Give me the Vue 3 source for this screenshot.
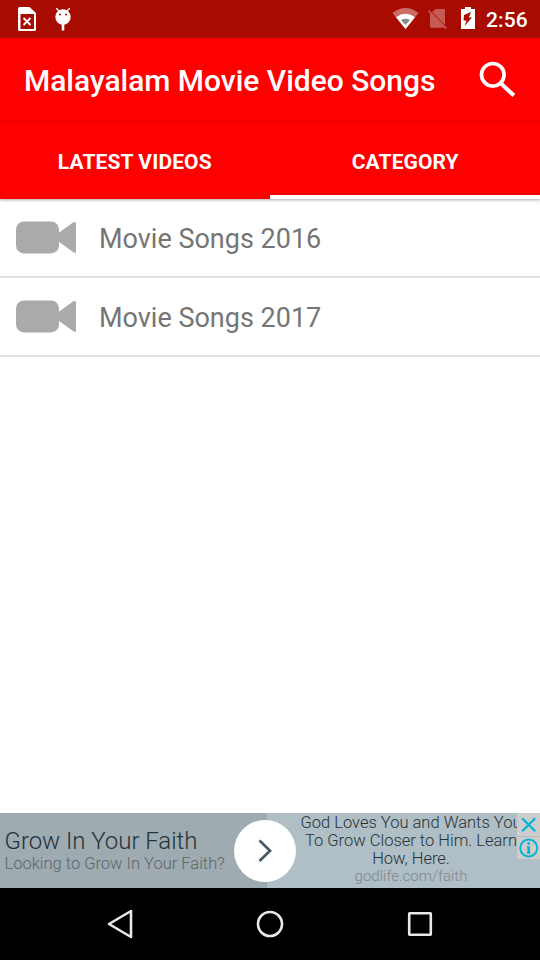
<template>
  <main class="screen">
    <header class="status-bar">
      <svg class="status-left" width="90" height="38" viewBox="0 0 90 38">
        <path d="M19.500 7H29.500L36 13v16.500q0 1.500-1.500 1.500h-15Q18 31 18 29.500V8.500Q18 7 19.500 7z" fill="#fff" />
        <path d="M20.500 14h13.500v15H20.500z" fill="#a80b00" />
        <path d="M23.500 18l7 7M30.500 18l-7 7" stroke="#fff" stroke-width="1.800" />
        <circle cx="63" cy="17" r="7.700" fill="#fff" />
        <path d="M59.500 11.500l-3-3M66.500 11.500l3-3" stroke="#fff" stroke-width="1.300" stroke-linecap="round" />
        <path d="M63 24v6.500" stroke="#fff" stroke-width="2.600" />
        <circle cx="60" cy="14.500" r="1" fill="#a80b00" />
        <circle cx="66" cy="14.500" r="1" fill="#a80b00" />
      </svg>
      <svg class="status-right" width="94" height="38" viewBox="390 0 94 38">
        <path d="M392.500 13Q405.500 3 418.500 13L405.500 29z" fill="#cb6d66" />
        <path d="M396 17.200Q405.500 10.500 415 17.200L405.500 29z" fill="#fff" />
        <path d="M401 20Q405.500 17.500 410 20L405.500 25z" fill="#8a8a88" />
        <path d="M435.500 9h8.500q1 0 1 1v15L432 12z" fill="#c65a53" />
        <path d="M429 10l18 18-1.200 1.200-1.500-1.500H431q-1 0-1-1V13.400L427.800 11.200z" fill="#c65a53" />
        <path d="M465 7h6v2h4v20h-14V9h4z" fill="#fff" />
        <path d="M471 12l-7 3-.5 5.500h3l-2 5.500 7.500-8.500h-3.200z" fill="#a80b00" />
      </svg>
      <span class="clock">2:56</span>
    </header>

    <div class="toolbar">
      <h1 class="title">Malayalam Movie Video Songs</h1>
      <svg class="search" width="40" height="40" viewBox="477 59 40 40">
        <circle cx="492.800" cy="74.800" r="11.300" fill="none" stroke="#fff" stroke-width="3.700" />
        <path d="M501.500 84l12.300 11.500" stroke="#fff" stroke-width="4" />
      </svg>
    </div>

    <nav class="tabs">
      <button
        v-for="(tab, idx) in tabs"
        :key="tab"
        :class="['tab', { active: idx === current }]"
        @click="current = idx"
      ><span>{{ tab }}</span></button>
    </nav>

    <ul class="list">
      <li v-for="item in categories" :key="item" class="item">
        <svg width="60" height="33" viewBox="0 0 60 33" fill="#aaa">
          <rect x="0" y=".4" width="43" height="32" rx="8" />
          <path d="M42.500 12L57 1.500Q60 0 60 2.500v28Q60 33 57 31L42.500 20.500z" />
        </svg>
        <span class="item-text">{{ item }}</span>
      </li>
    </ul>

    <section class="ad">
      <div class="ad-left">
        <div class="ad-title">Grow In Your Faith</div>
        <div class="ad-sub">Looking to Grow In Your Faith?</div>
      </div>
      <div class="ad-right">
        <div class="ad-text">God Loves You and Wants You</div>
        <div class="ad-text">To Grow Closer to Him. Learn</div>
        <div class="ad-text">How, Here.</div>
        <div class="ad-url">godlife.com/faith</div>
      </div>
      <div class="ad-arrow">
        <svg width="62" height="62" viewBox="0 0 62 62">
          <path d="M25.500 20.500L36 30.700 25.500 41" fill="none" stroke="#455a64" stroke-width="2.700" />
        </svg>
      </div>
      <div class="ad-choices">
        <svg class="ad-close" width="23" height="23" viewBox="0 0 23 23">
          <path d="M5.200 5.200l13 13M18.200 5.200l-13 13" stroke="#00b4d4" stroke-width="2.200" />
        </svg>
        <svg class="ad-info" width="23" height="22" viewBox="0 0 23 22">
          <circle cx="11.700" cy="11" r="8.500" fill="none" stroke="#00b4d4" stroke-width="1.800" />
          <path d="M11.700 5.300v2.500M11.700 9.300v7.200" fill="none" stroke="#00b4d4" stroke-width="2.500" />
          <path d="M9.800 9.900h2M9.800 16h3.800" stroke="#00b4d4" stroke-width="1" />
        </svg>
      </div>
    </section>

    <footer class="nav-bar">
      <svg width="36" height="36" viewBox="102 906 36 36">
        <path d="M109 924l22-13v26z" />
      </svg>
      <svg width="36" height="36" viewBox="252 906 36 36">
        <circle cx="270" cy="924" r="12" />
      </svg>
      <svg width="36" height="36" viewBox="402 906 36 36">
        <rect x="409.200" y="913.200" width="21.600" height="21.600" rx=".5" />
      </svg>
    </footer>
  </main>
</template>

<script setup>
import { ref } from 'vue';

const tabs = ['LATEST VIDEOS', 'CATEGORY'];
const current = ref(1);

const categories = ['Movie Songs 2016', 'Movie Songs 2017'];
</script>

<style>
body {
  margin: 0;
}
</style>

<style scoped>
.screen {
  display: flex;
  flex-direction: column;
  width: 540px;
  height: 960px;
  overflow: hidden;
  background: #fff;
  font-family: Roboto, "Liberation Sans", sans-serif;
}

.screen svg {
  display: block;
  flex: none;
}

.status-bar {
  display: flex;
  height: 38px;
  flex: none;
  background: #a80b00;
}

.status-right {
  margin-left: 300px;
}

.clock {
  margin-left: 2px;
  line-height: 40px;
  font-size: 21px;
  font-weight: 500;
  letter-spacing: 0.15px;
  color: #fff;
}

.toolbar {
  display: flex;
  align-items: center;
  justify-content: space-between;
  box-sizing: border-box;
  height: 84px;
  flex: none;
  padding: 0 23px 2px 24px;
  border-bottom: 1px solid #f50000;
  background: #f00;
}

.title {
  margin: 4px 0 0;
  font-size: 30px;
  font-weight: 500;
  line-height: 40px;
  letter-spacing: -0.02px;
  color: #fff;
  white-space: nowrap;
}

.tabs {
  display: flex;
  height: 77px;
  flex: none;
  background: #f00;
  box-shadow: 0 1px 3px rgba(0, 0, 0, 0.35);
  z-index: 1;
}

.tab {
  flex: 1;
  box-sizing: border-box;
  padding: 6px 0 0;
  border: none;
  border-bottom: 4px solid transparent;
  background: none;
  font-family: inherit;
  font-size: 21px;
  font-weight: 700;
  letter-spacing: 0.1px;
  color: #fff;
}

.tab.active {
  padding-left: 1px;
  border-bottom-color: #fff;
}

.list {
  flex: 1;
  margin: 0;
  padding: 0;
  list-style: none;
}

.item {
  display: flex;
  align-items: center;
  height: 77px;
  padding-left: 16px;
  border-bottom: 2px solid #e2e2e2;
}

.item-text {
  margin: 2px 0 0 23px;
  font-size: 27px;
  color: #757575;
}

.ad {
  position: relative;
  display: flex;
  height: 75px;
  flex: none;
  background: #b0bec5;
  font-weight: 300;
  white-space: nowrap;
}

.ad-left {
  box-sizing: border-box;
  width: 267px;
  padding: 14px 0 0 4.5px;
  background: #9eabb1;
}

.ad-title {
  font-size: 24px;
  line-height: 28px;
  letter-spacing: -0.04px;
  color: #263238;
}

.ad-sub {
  font-size: 16.5px;
  line-height: 17px;
  color: #5b666b;
}

.ad-right {
  flex: 1;
  padding: 1px 0 0 15px;
  text-align: center;
}

.ad-text {
  font-size: 16.5px;
  line-height: 18px;
  color: #263238;
}

.ad-url {
  margin-top: -1px;
  font-size: 15px;
  line-height: 18px;
  color: #7d888f;
}

.ad-arrow {
  position: absolute;
  left: 234px;
  top: 7px;
  width: 62px;
  height: 62px;
  border-radius: 50%;
  background: #fff;
}

.ad-choices {
  position: absolute;
  right: 0;
  top: 0;
  display: flex;
  flex-direction: column;
  align-items: flex-end;
  gap: 1px;
}

.ad-choices svg {
  background: #ccc;
}

.nav-bar {
  display: flex;
  align-items: center;
  justify-content: center;
  gap: 114px;
  height: 72px;
  flex: none;
  background: #000;
}

.nav-bar svg {
  fill: none;
  stroke: #e8e8e8;
  stroke-width: 2.6;
  stroke-linejoin: round;
}
</style>
